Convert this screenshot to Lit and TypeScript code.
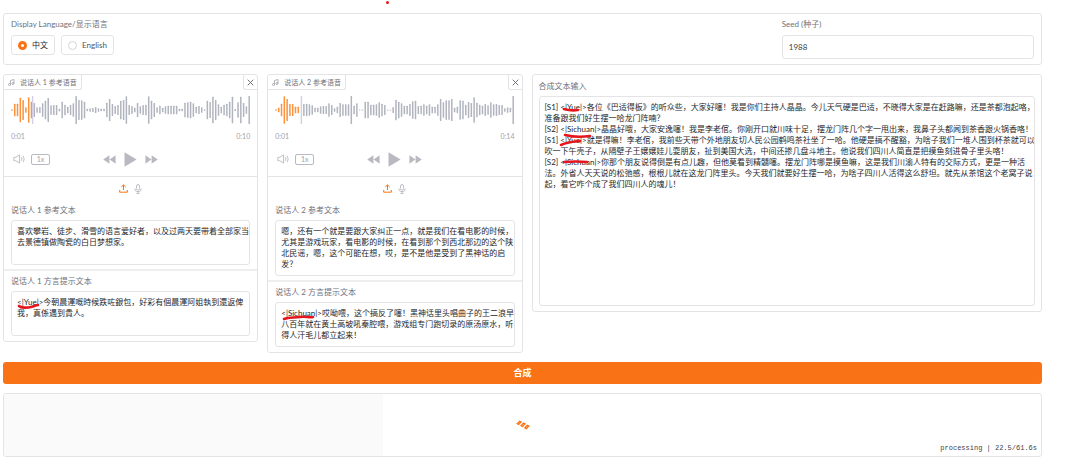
import { LitElement, html, css, svg } from "lit";
import { customElement, property } from "lit/decorators.js";

interface Speaker {
  id: number;
  duration: string;
  refText: string;
  refRows: number;
  dialect: string;
  mark: string;
  played: number;
  peaks: number[];
}

const FONT = css`Lato, "Noto Sans CJK SC", "Noto Sans", sans-serif`;

const shared = css`
  * {
    box-sizing: border-box;
  }
  label,
  .caption {
    display: block;
    font-size: 8px;
    line-height: 12px;
    color: #71717a;
  }
  .field {
    position: relative;
    margin-top: 4px;
  }
  textarea {
    display: block;
    width: 100%;
    margin: 0;
    padding: 5px 0 5px 5px;
    border: 1px solid #e4e4e7;
    border-radius: 3px;
    background: #fff;
    color: #27272a;
    font: 8px/11px ${FONT};
    resize: none;
    overflow: hidden;
    white-space: pre;
    outline: none;
  }
  .mark {
    position: absolute;
    left: 0;
    top: 0;
    overflow: visible;
    pointer-events: none;
    fill: none;
    stroke: #e5161d;
    stroke-width: 2.6;
    stroke-linecap: round;
    stroke-linejoin: round;
  }
`;

const speakers: Speaker[] = [
  {
    id: 1,
    duration: "0:10",
    refText: "喜欢攀岩、徒步、滑雪的语言爱好者，以及过两天要带着全部家当\n去景德镇做陶瓷的白日梦想家。",
    refRows: 3,
    dialect: "<|Yue|>今朝晨運嘅時候跌咗銀包，好彩有個晨運阿姐執到還返俾\n我，真係遇到貴人。",
    mark: "M8 15 C10 17 16 17 20 16 S25 14 27 14",
    played: 8,
    peaks: [
      4, 38, 38, 74, 60, 16, 76, 50, 42, 16, 18, 40, 56, 72, 28, 30, 30, 8, 50, 32, 20, 30, 40, 84, 60, 58, 50, 8, 10,
      12, 18, 10, 8, 8, 44, 66, 36, 24, 30, 56, 60, 82, 30, 24, 14, 42, 22, 30, 32, 82, 56, 42, 16, 26, 14, 22, 26, 26,
      26, 26, 8, 8, 44, 46, 50, 40, 20, 24, 16, 4, 56, 48, 80, 60, 34, 20, 32, 38, 50, 80, 6, 46, 80, 42, 22, 84,
    ],
  },
  {
    id: 2,
    duration: "0:14",
    refText:
      "嗯，还有一个就是要跟大家纠正一点，就是我们在看电影的时候，\n尤其是游戏玩家，看电影的时候，在看到那个到西北那边的这个陕\n北民谣，嗯，这个可能在想，哎，是不是他是受到了黑神话的启\n发？",
    refRows: 4,
    dialect:
      "<|Sichuan|>哎呦喂，这个搞反了噻！黑神话里头唱曲子的王二浪早\n八百年就在黄土高坡吼秦腔喂，游戏组专门跑切录的原汤原水，听\n得人汗毛儿都立起来！",
    mark: "M9 17 C14 15 19 16 25 15 S34 16 38 15",
    played: 9,
    peaks: [
      4, 14, 38, 82, 66, 36, 36, 20, 20, 0, 36, 38, 34, 28, 14, 14, 22, 24, 24, 40, 30, 10, 20, 42, 34, 34, 34, 84, 26,
      40, 3, 3, 50, 50, 32, 32, 34, 46, 38, 30, 3, 3, 18, 62, 50, 40, 26, 26, 36, 52, 56, 24, 26, 34, 26, 34, 20, 20,
      34, 66, 46, 58, 58, 66, 14, 20, 58, 56, 32, 48, 42, 76, 44, 32, 26, 36, 28, 46, 34, 36, 30, 30, 10, 16, 14, 84,
    ],
  },
];

const SCRIPT = `[S1] <|Yue|>各位《巴适得板》的听众些，大家好噻！我是你们主持人晶晶。今儿天气硬是巴适，不晓得大家是在赶路嘛，还是茶都泡起咯，
准备跟我们好生摆一哈龙门阵喃？
[S2] <|Sichuan|>晶晶好哦，大家安逸噻！我是李老倌。你刚开口就川味十足，摆龙门阵几个字一甩出来，我鼻子头都闻到茶香跟火锅香咯！
[S1] <|Yue|>就是得嘛！李老倌，我前些天带个外地朋友切人民公园鹤鸣茶社坐了一哈。他硬是搞不醒豁，为啥子我们一堆人围到杯茶就可以
吹一下午壳子，从隔壁子王嬢嬢娃儿耍朋友，扯到美国大选，中间还掺几盘斗地主。他说我们四川人简直是把摸鱼刻进骨子里头咯！
[S2] <|Sichuan|>你那个朋友说得倒是有点儿趣，但他莫看到精髓噻。摆龙门阵哪是摸鱼嘛，这是我们川渝人特有的交际方式，更是一种活
法。外省人天天说的松弛感，根根儿就在这龙门阵里头。今天我们就要好生摆一哈，为啥子四川人活得这么舒坦。就先从茶馆这个老窝子说
起，看它咋个成了我们四川人的魂儿！`;

@customElement("speaker-card")
export class SpeakerCard extends LitElement {
  @property({ attribute: false }) speaker!: Speaker;

  static styles = [
    shared,
    css`
      :host {
        display: block;
        min-width: 0;
        border: 1px solid #e4e4e7;
        border-radius: 3px;
        overflow: hidden;
      }
      button {
        display: flex;
        align-items: center;
        justify-content: center;
        padding: 0;
        border: 0;
        background: none;
        color: #b9b9c1;
      }
      svg {
        display: block;
      }
      .head {
        display: flex;
        justify-content: space-between;
        height: 15px;
      }
      .tag {
        display: flex;
        align-items: center;
        gap: 5px;
        padding: 0 4px;
        border: solid #e4e4e7;
        border-width: 0 1px 1px 0;
        border-radius: 0 0 3px 0;
        font-size: 7px;
        line-height: 12px;
        color: #71717a;
      }
      .head .close {
        width: 14px;
        border: solid #e4e4e7;
        border-width: 0 0 1px 1px;
        border-radius: 0 0 0 3px;
        color: #71717a;
      }
      .wave {
        width: 100%;
        height: 28px;
        margin-top: 6px;
        padding: 0 7px;
      }
      .bar {
        fill: #b0b4be;
      }
      .bar.played {
        fill: #fb923c;
      }
      .cursor {
        fill: #d5cde6;
      }
      .times {
        display: flex;
        justify-content: space-between;
        margin-top: 6px;
        padding: 0 7px;
        font-size: 7px;
        line-height: 12px;
        color: #a1a1aa;
      }
      .controls {
        display: grid;
        grid-template-columns: 1fr auto 1fr;
        align-items: center;
        height: 35px;
        padding: 0 9px;
        border-bottom: 1px solid #e4e4e7;
      }
      .group {
        display: flex;
        align-items: center;
        gap: 6px;
      }
      .transport {
        gap: 8px;
      }
      .controls .speed {
        width: 19px;
        height: 11px;
        border: 1px solid #b9b9c1;
        border-radius: 2px;
        font: 7px/9px ${FONT};
        color: #a1a1aa;
      }
      .sources {
        display: flex;
        align-items: center;
        justify-content: center;
        gap: 6px;
        height: 23px;
      }
      .sources .upload {
        color: #f97316;
      }
      .block {
        padding: 4px 7px;
      }
      .block + .block {
        border-top: 2px solid #eeeeef;
        padding-bottom: 5px;
      }
    `,
  ];

  render() {
    const s = this.speaker;
    const pitch = 2.8;
    return html`
      <div class="head">
        <span class="tag">
          <svg width="7" height="7" viewBox="0 0 14 14" fill="none" stroke="#8b8b94" stroke-width="1.3">
            <path d="M5 11V3l7-2v8" />
            <circle cx="3" cy="11" r="2" />
            <circle cx="10" cy="9" r="2" />
          </svg>
          说话人 ${s.id} 参考语音
        </span>
        <button class="close" aria-label="清除">
          <svg width="7" height="7" viewBox="0 0 7 7" stroke="currentColor" stroke-width="1"><path d="M.7.7l5.6 5.6M6.3.7L.7 6.3" /></svg>
        </button>
      </div>
      <svg class="wave" viewBox="0 0 240 28" preserveAspectRatio="none">
        ${s.peaks.map((p, i) => {
          const h = p / 3;
          return svg`<rect class=${i < s.played ? "bar played" : "bar"} x=${i * pitch + 0.2} y=${14 - h / 2} width="1.5" height=${h} rx=".5" />`;
        })}
        <rect class="cursor" x=${s.played * pitch - (s.id === 1 ? 1.4 : -0.6)} y="0" width="1.4" height="28" />
      </svg>
      <div class="times"><span>0:01</span><span>${s.duration}</span></div>
      <div class="controls">
        <div class="group">
          <button aria-label="音量">
            <svg width="12" height="10" viewBox="0 0 12 10" fill="none" stroke="currentColor" stroke-width=".9" stroke-linejoin="round">
              <path d="M.8 3.3h2L6.6.9v8.2L2.8 6.7h-2zM8.4 3.2q1 1.8 0 3.6M10.2 1.9q2 3.1 0 6.2" />
            </svg>
          </button>
          <button class="speed">1x</button>
        </div>
        <div class="group transport">
          <button aria-label="后退">
            <svg width="13" height="9" viewBox="0 0 13 9" fill="currentColor"><path d="M6.4.3v8.4L.2 4.5zM12.6.3v8.4L6.6 4.5z" /></svg>
          </button>
          <button aria-label="播放">
            <svg width="13" height="15" viewBox="0 0 13 15" fill="currentColor"><path d="M.5.3L12.6 7.5.5 14.7z" /></svg>
          </button>
          <button aria-label="前进">
            <svg width="13" height="9" viewBox="0 0 13 9" fill="currentColor"><path d="M.4.3v8.4l6-4.2zM6.6.3v8.4l6.2-4.2z" /></svg>
          </button>
        </div>
      </div>
      <div class="sources">
        <button class="upload" aria-label="上传">
          <svg width="9" height="9" viewBox="0 0 9 9" fill="none" stroke="currentColor" stroke-width="1"><path d="M4.5 6V1M2.3 3L4.5.9 6.7 3M.7 6v2.2h7.6V6" /></svg>
        </button>
        <button aria-label="录音">
          <svg width="8" height="10" viewBox="0 0 8 10" fill="none" stroke="currentColor" stroke-width=".9">
            <rect x="2.5" y=".5" width="3" height="5.6" rx="1.5" />
            <path d="M.8 4.4v.5a3.2 2.8 0 0 0 6.4 0v-.5M4 7.7v1.8M2.4 9.5h3.2" />
          </svg>
        </button>
      </div>
      <div class="block">
        <label for="ref">说话人 ${s.id} 参考文本</label>
        <div class="field"><textarea id="ref" rows=${s.refRows} .value=${s.refText}></textarea></div>
      </div>
      <div class="block">
        <label for="dialect">说话人 ${s.id} 方言提示文本</label>
        <div class="field">
          <textarea id="dialect" rows="3" .value=${s.dialect}></textarea>
          <svg class="mark" width="40" height="20"><path d=${s.mark} /></svg>
        </div>
      </div>
    `;
  }
}

@customElement("app-root")
export class AppRoot extends LitElement {
  @property({ type: Number }) elapsed = 22.5;
  @property({ type: Number }) estimate = 61.6;

  static styles = [
    shared,
    css`
      :host {
        display: block;
        position: relative;
        padding: 13px 38px 5px 3px;
        background: #fff;
        font-family: ${FONT};
      }
      .dot {
        position: absolute;
        left: 386px;
        top: 1px;
        width: 3px;
        height: 3px;
        border-radius: 50%;
        background: #e5161d;
      }
      .page {
        display: flex;
        flex-direction: column;
        gap: 9px;
      }
      .panel {
        border: 1px solid #e4e4e7;
        border-radius: 3px;
      }
      .settings {
        display: grid;
        grid-template-columns: 3fr 1fr;
        padding: 4px 0 5px;
      }
      .language {
        margin: 0;
        padding: 0 7px;
        border: 0;
      }
      .language legend {
        padding: 0;
      }
      .options {
        display: flex;
        gap: 6px;
        margin-top: 5px;
      }
      .option {
        display: flex;
        align-items: center;
        gap: 5px;
        height: 20px;
        padding: 0 6px;
        border: 1px solid #e4e4e7;
        border-radius: 3px;
        color: #52525b;
      }
      .option.on {
        color: #27272a;
      }
      .option input {
        appearance: none;
        width: 9px;
        height: 9px;
        margin: 0;
        border: 1px solid #d4d4d8;
        border-radius: 50%;
        background: #fff;
      }
      .option input:checked {
        border: 3px solid #f97316;
      }
      .seed {
        padding-right: 7px;
      }
      .seed input {
        display: block;
        width: 100%;
        height: 24px;
        margin-top: 5px;
        padding: 0 6px;
        border: 1px solid #e4e4e7;
        border-radius: 3px;
        color: #3f3f46;
        font: 8px/12px ${FONT};
      }
      .columns {
        display: grid;
        grid-template-columns: 1fr 1fr 2fr;
        align-items: start;
        gap: 9px;
      }
      .script {
        min-width: 0;
        padding: 5px 6px;
      }
      .script textarea {
        height: 210px;
      }
      .run {
        height: 22px;
        padding: 0;
        border: 0;
        border-radius: 3px;
        background: #f97316;
        color: #fff;
        font: bold 9px/22px ${FONT};
      }
      .output {
        display: grid;
        height: 64px;
        overflow: hidden;
      }
      .progress,
      .spinner,
      .status {
        grid-area: 1 / 1;
      }
      .progress {
        background: #fafafa;
      }
      .spinner {
        place-self: center;
      }
      .status {
        place-self: end;
        padding: 0 4px 3px 0;
        color: #3f3f46;
        font: 7px/10px "Liberation Mono", monospace;
      }
    `,
  ];

  render() {
    return html`
      <span class="dot"></span>
      <main class="page">
        <section class="panel settings">
          <fieldset class="language">
            <legend class="caption">Display Language/显示语言</legend>
            <div class="options">
              <label class="option on"><input type="radio" name="lang" checked />中文</label>
              <label class="option"><input type="radio" name="lang" />English</label>
            </div>
          </fieldset>
          <div class="seed">
            <label for="seed">Seed (种子)</label>
            <input id="seed" type="text" inputmode="numeric" value="1988" />
          </div>
        </section>
        <section class="columns">
          ${speakers.map((s) => html`<speaker-card .speaker=${s}></speaker-card>`)}
          <div class="panel script">
            <label for="script">合成文本输入</label>
            <div class="field">
              <textarea id="script" .value=${SCRIPT}></textarea>
              <svg class="mark" width="60" height="80">
                <path d="M25 13q7 2 14 1M26 39q12 3 25 1M22 49q6-3 19-4M25 66q12-1 23 0" />
              </svg>
            </div>
          </div>
        </section>
        <button class="run">合成</button>
        <section class="panel output">
          <div class="progress" style="width:${(this.elapsed / this.estimate) * 100}%"></div>
          <svg class="spinner" width="14" height="10" viewBox="0 0 14 10" fill="none" stroke="#f97316" stroke-width="1.3">
            <path d="M1.2 3.6L3.6 1.2l1.5.8-2.5 2.5zM5 5.7l2.5-2.6 1.5.8-2.5 2.6zM8.9 7.8l2.4-2.6 1.5.8-2.4 2.6z" />
          </svg>
          <div class="status">processing | ${this.elapsed}/${this.estimate}s</div>
        </section>
      </main>
    `;
  }
}
